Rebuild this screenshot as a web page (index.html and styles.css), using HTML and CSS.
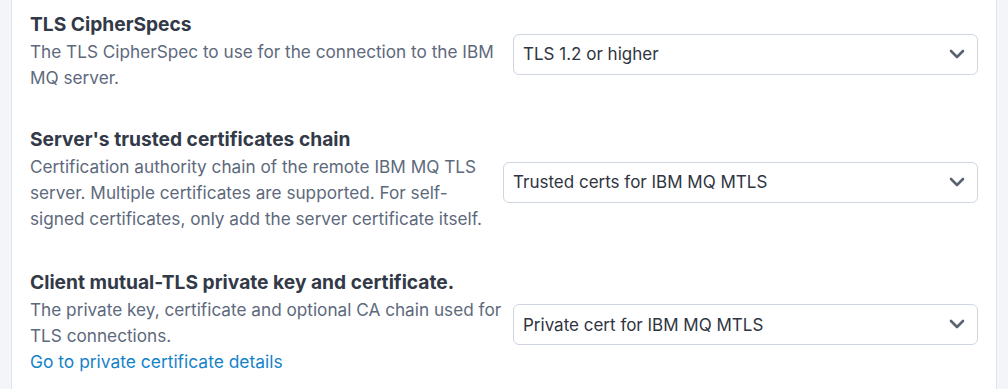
FILE: index.html
```html
<!DOCTYPE html>
<html lang="en">
<head>
    <meta charset="UTF-8">
    <meta name="viewport" content="width=device-width, initial-scale=1.0">
    <title>IBM MQ TLS settings</title>
    <link rel="stylesheet" href="styles.css">
</head>
<body>
    <div class="panel">
        <div class="field">
            <div class="field-text">
                <div class="field-title">TLS CipherSpecs</div>
                <div class="field-desc">The TLS CipherSpec to use for the connection to the IBM MQ server.</div>
            </div>
            <div class="select-wrap">
                <select class="select">
                    <option>TLS 1.2 or higher</option>
                </select>
                <svg class="chevron" width="16" height="10" viewBox="0 0 16 10"><path d="M2 2l6 6 6-6" fill="none" stroke="#5b6270" stroke-width="2.6" stroke-linecap="round" stroke-linejoin="round"/></svg>
            </div>
        </div>
        <div class="field field-narrow">
            <div class="field-text">
                <div class="field-title">Server's trusted certificates chain</div>
                <div class="field-desc">Certification authority chain of the remote IBM MQ TLS server. Multiple certificates are supported. For self-signed certificates, only add the server certificate itself.</div>
            </div>
            <div class="select-wrap">
                <select class="select">
                    <option>Trusted certs for IBM MQ MTLS</option>
                </select>
                <svg class="chevron" width="16" height="10" viewBox="0 0 16 10"><path d="M2 2l6 6 6-6" fill="none" stroke="#5b6270" stroke-width="2.6" stroke-linecap="round" stroke-linejoin="round"/></svg>
            </div>
        </div>
        <div class="field">
            <div class="field-text">
                <div class="field-title">Client mutual-TLS private key and certificate.</div>
                <div class="field-desc">The private key, certificate and optional CA chain used for TLS connections.</div>
                <a class="field-link" href="#">Go to private certificate details</a>
            </div>
            <div class="select-wrap">
                <select class="select">
                    <option>Private cert for IBM MQ MTLS</option>
                </select>
                <svg class="chevron" width="16" height="10" viewBox="0 0 16 10"><path d="M2 2l6 6 6-6" fill="none" stroke="#5b6270" stroke-width="2.6" stroke-linecap="round" stroke-linejoin="round"/></svg>
            </div>
        </div>
    </div>
</body>
</html>
```

FILE: styles.css
```css
body {
    font-family: Inter, "Noto Sans", sans-serif;
    margin: 0;
    padding: 0;
    background-color: #f3f5f9;
}
.panel {
    margin: 0 11px;
    padding: 10px 18px 0;
    height: 379px;
    background-color: white;
    border-left: 1px solid #dde2eb;
    border-right: 1px solid #dde2eb;
}
.field {
    display: grid;
    grid-template-columns: 473px 1fr;
    column-gap: 10px;
    align-items: center;
    margin-bottom: 34px;
}
.field-narrow {
    grid-template-columns: 460px 1fr;
    column-gap: 13px;
    margin-bottom: 36px;
}
.field-title {
    font-size: 19.2px;
    font-weight: 700;
    line-height: 28px;
    color: #323947;
    margin-bottom: 1px;
}
.field-desc {
    font-size: 17.2px;
    line-height: 26px;
    color: #5d697c;
}
.field-link {
    display: block;
    font-size: 17.4px;
    line-height: 25px;
    color: #1683c9;
    text-decoration: none;
}
.select-wrap {
    position: relative;
    margin-top: 7px;
}
.select {
    appearance: none;
    -webkit-appearance: none;
    width: 100%;
    height: 41px;
    padding: 0 40px 0 9px;
    font-family: Inter, "Noto Sans", sans-serif;
    font-size: 17px;
    color: #2f3542;
    background-color: white;
    border: 1px solid #cfd6e2;
    border-radius: 6px;
}
.chevron {
    position: absolute;
    right: 13px;
    top: 15px;
    pointer-events: none;
}
```
